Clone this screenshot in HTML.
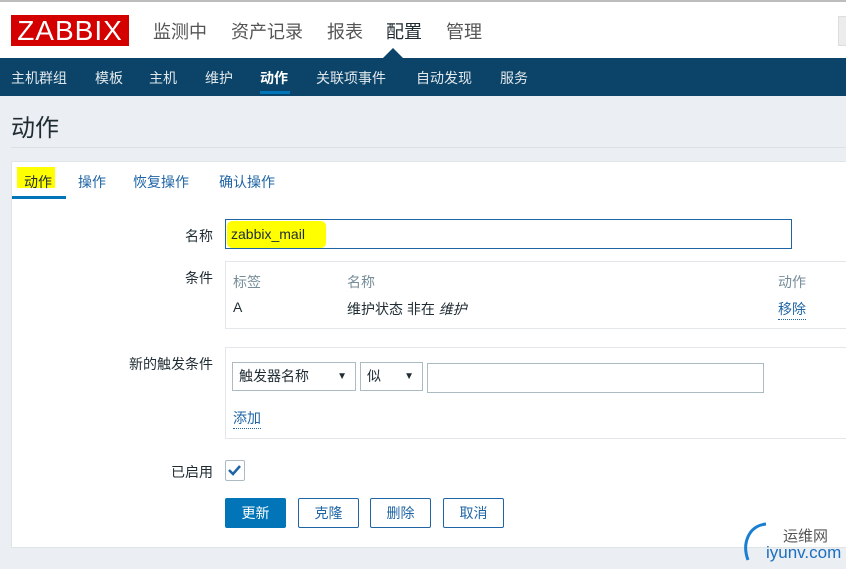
<!DOCTYPE html>
<html><head><meta charset="utf-8"><style>
*{margin:0;padding:0;box-sizing:border-box}
body{width:846px;height:569px;overflow:hidden;background:#ebeef2;font-family:"Liberation Sans","Noto Sans CJK SC",sans-serif;position:relative;color:#1f2c33}
.a{position:absolute;white-space:nowrap}
.top{position:absolute;left:0;top:0;width:846px;height:58px;background:#fff;border-top:2px solid #bdbdbd}
.logo{left:11px;top:15px;width:118px;height:31px;background:#d40000;color:#fff;font-size:28px;line-height:31px;text-align:center;letter-spacing:1px}
.nav{top:18px;font-size:18px;color:#555}
.bar{position:absolute;left:0;top:58px;width:846px;height:38px;background:#0b4468}
.sub{top:68px;font-size:14px;color:#fff;opacity:.88}
.panel{position:absolute;left:11px;top:161px;width:840px;height:387px;background:#fff;border:1px solid #dfe4e7}
.lbl{font-size:14px;color:#1f2c33;text-align:right;width:120px}
.blue{color:#1f65a6}
.btn{position:absolute;top:498px;height:30px;width:61px;border:1px solid #1f65a6;border-radius:2px;color:#1f65a6;font-size:14px;text-align:center;line-height:28px;background:#fff}
</style></head><body>
<div class="top"></div>
<div class="a logo">ZABBIX</div>
<div class="a nav" style="left:153px">监测中</div>
<div class="a nav" style="left:231px">资产记录</div>
<div class="a nav" style="left:327px">报表</div>
<div class="a nav" style="left:386px;color:#1f2c33">配置</div>
<div class="a nav" style="left:446px">管理</div>
<div class="a" style="left:838px;top:16px;width:10px;height:30px;background:#ececec;border:1px solid #ddd"></div>
<div class="bar"></div>
<div class="a" style="left:383px;top:48px;width:0;height:0;border-left:10px solid transparent;border-right:10px solid transparent;border-bottom:10px solid #0b4468"></div>
<div class="a sub" style="left:11px">主机群组</div>
<div class="a sub" style="left:95px">模板</div>
<div class="a sub" style="left:149px">主机</div>
<div class="a sub" style="left:205px">维护</div>
<div class="a sub" style="left:260px;opacity:1;font-weight:bold">动作</div>
<div class="a" style="left:260px;top:91px;width:30px;height:3px;background:#0275b8"></div>
<div class="a sub" style="left:316px">关联项事件</div>
<div class="a sub" style="left:416px">自动发现</div>
<div class="a sub" style="left:500px">服务</div>
<div class="a" style="left:11px;top:108px;font-size:24px;color:#1f2c33">动作</div>
<div class="a" style="left:11px;top:147px;width:835px;height:1px;background:#dde1e4"></div>
<div class="panel"></div>
<div class="a" style="left:17px;top:167px;width:38px;height:21px;background:#ffff00"></div>
<div class="a" style="left:24px;top:172px;font-size:14px">动作</div>
<div class="a blue" style="left:78px;top:172px;font-size:14px">操作</div>
<div class="a blue" style="left:133px;top:172px;font-size:14px">恢复操作</div>
<div class="a blue" style="left:219px;top:172px;font-size:14px">确认操作</div>
<div class="a" style="left:12px;top:196px;width:54px;height:3px;background:#0275b8"></div>
<div class="a lbl" style="left:93px;top:226px">名称</div>
<div class="a" style="left:225px;top:219px;width:567px;height:30px;border:1px solid #1f65a6;background:#fff"></div>
<div class="a" style="left:227px;top:221px;width:99px;height:27px;background:#ffff00;border-radius:5px"></div>
<div class="a" style="left:231px;top:226px;font-size:14px;color:#1f2c33">zabbix_mail</div>
<div class="a lbl" style="left:93px;top:268px">条件</div>
<div class="a" style="left:225px;top:261px;width:630px;height:68px;border:1px solid #e4e7ea"></div>
<div class="a" style="left:233px;top:272px;font-size:14px;color:#768d99">标签</div>
<div class="a" style="left:347px;top:272px;font-size:14px;color:#768d99">名称</div>
<div class="a" style="left:778px;top:272px;font-size:14px;color:#768d99">动作</div>
<div class="a" style="left:233px;top:299px;font-size:14px">A</div>
<div class="a" style="left:347px;top:299px;font-size:14px">维护状态 非在 <i>维护</i></div>
<div class="a blue" style="left:778px;top:299px;font-size:14px;border-bottom:1px dotted #1f65a6">移除</div>
<div class="a lbl" style="left:93px;top:354px">新的触发条件</div>
<div class="a" style="left:225px;top:347px;width:630px;height:92px;border:1px solid #e4e7ea"></div>
<div class="a" style="left:232px;top:362px;width:124px;height:29px;border:1px solid #acbbc2;font-size:14px;line-height:27px;padding-left:6px">触发器名称<span style="position:absolute;right:8px;font-size:10px">▼</span></div>
<div class="a" style="left:360px;top:362px;width:63px;height:29px;border:1px solid #acbbc2;font-size:14px;line-height:27px;padding-left:6px">似<span style="position:absolute;right:8px;font-size:10px">▼</span></div>
<div class="a" style="left:427px;top:363px;width:337px;height:30px;border:1px solid #acbbc2"></div>
<div class="a blue" style="left:233px;top:408px;font-size:14px;border-bottom:1px dotted #1f65a6">添加</div>
<div class="a lbl" style="left:93px;top:462px">已启用</div>
<div class="a" style="left:225px;top:460px;width:20px;height:21px;border:1px solid #acbbc2;border-radius:2px"></div>
<svg class="a" style="left:227px;top:463px" width="16" height="14"><path d="M2 7 L6 11 L13 3" stroke="#1f65a6" stroke-width="2.5" fill="none"/></svg>
<div class="btn" style="left:225px;background:#0275b8;border-color:#0275b8;color:#fff">更新</div>
<div class="btn" style="left:298px">克隆</div>
<div class="btn" style="left:370px">删除</div>
<div class="btn" style="left:443px">取消</div>
<svg class="a" style="left:740px;top:520px" width="30" height="46"><path d="M26 4 C8 6 2 24 8 40" stroke="#1a7fd0" stroke-width="3" fill="none"/></svg>
<div class="a" style="left:783px;top:525px;font-size:15px;color:#555">运维网</div>
<div class="a" style="left:766px;top:543px;font-size:17px;color:#1a6fc0">iyunv.com</div>
</body></html>
